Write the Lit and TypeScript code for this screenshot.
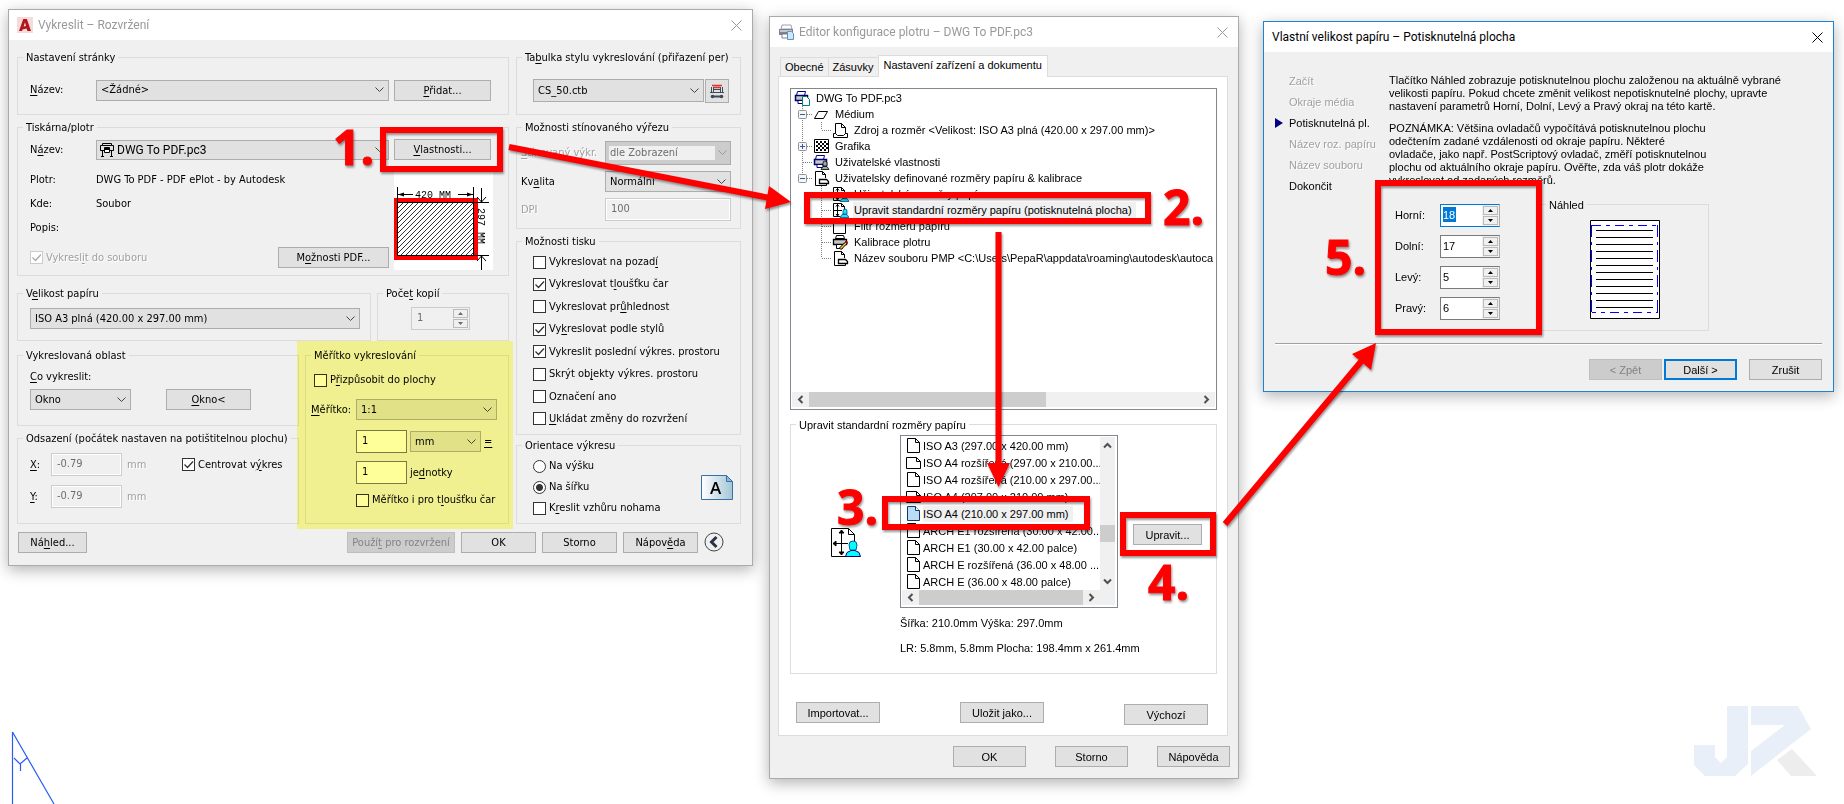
import { LitElement, html, css, svg, nothing, TemplateResult } from "lit";
import { customElement } from "lit/decorators.js";

const page = svg`<path d="M1.500 1.500h8l4 4v10h-12z" fill="#fff" stroke="#000"/><path d="M9.500 1.500v4h4" fill="none" stroke="#000"/>`;
const pageWide = svg`<path d="M.5 3.500h10l4 4v7h-14z" fill="#fff" stroke="#000"/><path d="M10.500 3.500v4h4" fill="none" stroke="#000"/>`;
const printerBlue = svg`<path d="M3.500 1.500h8l-1 4h-8z" fill="#fff" stroke="#00007b"/><path d="M1.500 5.500h12v5h-12z" fill="#c6c6c6" stroke="#00007b" stroke-width="1.500"/><path d="M4 10.500h6v3h-6z" fill="#fff" stroke="#00007b"/>`;
const person = svg`<path d="M11 9a2 2 0 0 1 4 0v3h-4z" fill="#19e3ff" stroke="#00507b" stroke-width=".8"/><path d="M8 15.500l2-3h5l2 3z" fill="#19e3ff" stroke="#00507b" stroke-width=".8"/>`;

const icons: Record<string, unknown> = {
  page,
  pageWide,
  pageBlue: svg`<path d="M1.500 1.500h8l4 4v10h-12z" fill="#bcdcf4" stroke="#123a66"/><path d="M9.500 1.500v4h4" fill="#fff" stroke="#123a66"/>`,
  printer: svg`${printerBlue}<path d="M8.500 6.500h4l3 3v6h-7z" fill="#fff" stroke="#007b7b"/>`,
  sheet: svg`<path d="M1.500 12.500l4-7h9l-4 7z" fill="#fff" stroke="#000"/>`,
  source: svg`<path d="M3.500 12V1.500h6l4 4V12" fill="#fff" stroke="#000"/><path d="M9.500 1.500v4h4" fill="none" stroke="#000"/><path d="M3.500 11.500h-2v4h14v-4h-2l-2 2h-6z" fill="#fff" stroke="#000"/>`,
  graphic: svg`<path d="M1.500 1.500h14v13h-14z" fill="#fff" stroke="#000"/><path d="M3 3h2v2H3zM7 3h2v2H7zM11 3h2v2h-2zM5 5h2v2H5zM9 5h2v2H9zM13 5h2v2h-2zM3 7h2v2H3zM7 7h2v2H7zM11 7h2v2h-2zM5 9h2v2H5zM9 9h2v2H9zM13 9h2v2h-2zM3 11h2v2H3zM7 11h2v2H7zM11 11h2v2h-2z" fill="#000"/>`,
  props: svg`${printerBlue}<path d="M10 9a2 2 0 0 1 4 0v3h-4z" fill="#9aa" stroke="#000" stroke-width=".8"/><path d="M8 15.500l2-3h4l2 3z" fill="#9aa" stroke="#000" stroke-width=".8"/>`,
  custom: svg`<path d="M2.500 1.500h7l3 3V8M2.500 1.500v14h11v-2" fill="#fff" stroke="#000"/><path d="M9.500 1.500v3h3" fill="none" stroke="#000"/><path d="M6.500 9.500h7l2 2v2h-9z" fill="#fff" stroke="#000" stroke-width="1.300"/>`,
  userSize: svg`<path d="M1.500 1.500h8l3 3v10h-11z" fill="#fff"/><path d="M1.500 1.500h8l3 3V8M1.500 1.500v13h7M9.500 1.500v3h3M5.500 2v12M2 8.500h8M4 4.500l1.500-2 1.500 2M4 12l1.500 2 1.500-2" fill="none" stroke="#000"/>${person}`,
  calib: svg`<path d="M4.500 1.500h7l1 3h-9z" fill="#fff" stroke="#000"/><path d="M1.500 5.500h13v5h-13z" fill="#c6c6c6" stroke="#000" stroke-width="1.300"/><path d="M4.500 10.500h6v4h-6z" fill="#fff" stroke="#000"/><path d="M8 15l7-7" stroke="#000" stroke-width="3"/><path d="M8.500 14.500l5.500-5.500" stroke="#ffd23c" stroke-width="1.500"/><path d="M14 9l1.500-1.500" stroke="#c00" stroke-width="2"/>`,
  plotter: svg`<path d="M3.500 1.500h9v2h2v5h-2M3.500 1.500v2h-2v5h2M3.500 3.500h9M1.500 8.500h13M3.500 8.500v6M12.500 8.500v6M2 14.500h3M11 14.500h3" fill="none" stroke="#000"/><path d="M5.500 5.500h5v5h-5z" fill="#fff" stroke="#000"/><path d="M6 6h4v2H6z"/>`,
  appA: svg`<path d="M0 0h16v16H0z" fill="#f3dcda"/><path d="M2 14L6.300 2h3.600L14 14h-3.600L9.500 11.500l-4 1L5 14z" fill="#b3141c"/><path d="M8 5.200L6.600 9.600l2.400-.6z" fill="#f3dcda"/>`,
  appPrinter: svg`<path d="M4 1h9l1 4H3z" fill="#fff" stroke="#889" stroke-width=".8"/><path d="M1 5h14v6H1z" fill="#7d848c"/><path d="M2 6h12v2H2z" fill="#c3c8cd"/><path d="M4 10h7v4H4z" fill="#fff" stroke="#667" stroke-width=".8"/><path d="M9.500 7.500h4l2 2v6h-6z" fill="#cfe6f8" stroke="#5b94c4"/>`,
};

const icon = (name: string) =>
  html`<svg class="ico" width="17" height="17" viewBox="0 0 17 17" aria-hidden="true">${icons[name]}</svg>`;

interface Node {
  level: number;
  icon: string;
  text: string;
  box?: "-" | "+";
  last?: boolean;
  main?: boolean;
  selected?: boolean;
}

const tree: Node[] = [
  { level: 0, icon: "printer", text: "DWG To PDF.pc3" },
  { level: 1, icon: "sheet", text: "Médium", box: "-" },
  { level: 2, icon: "source", text: "Zdroj a rozměr <Velikost: ISO A3 plná (420.00 x 297.00 mm)>", last: true, main: true },
  { level: 1, icon: "graphic", text: "Grafika", box: "+" },
  { level: 1, icon: "props", text: "Uživatelské vlastnosti" },
  { level: 1, icon: "custom", text: "Uživatelsky definované rozměry papíru & kalibrace", box: "-", last: true },
  { level: 2, icon: "userSize", text: "Uživatelské rozměry papíru" },
  { level: 2, icon: "userSize", text: "Upravit standardní rozměry papíru (potisknutelná plocha)", selected: true },
  { level: 2, icon: "page", text: "Filtr rozměrů papíru" },
  { level: 2, icon: "calib", text: "Kalibrace plotru" },
  { level: 2, icon: "custom", text: "Název souboru PMP <C:\\Users\\PepaR\\appdata\\roaming\\autodesk\\autoca", last: true },
];

const sizes: [string, string][] = [
  ["page", "ISO A3 (297.00 x 420.00 mm)"],
  ["pageWide", "ISO A4 rozšířená (297.00 x 210.00..."],
  ["page", "ISO A4 rozšířená (210.00 x 297.00..."],
  ["pageWide", "ISO A4 (297.00 x 210.00 mm)"],
  ["pageBlue", "ISO A4 (210.00 x 297.00 mm)"],
  ["page", "ARCH E1 rozšířená (30.00 x 42.00..."],
  ["page", "ARCH E1 (30.00 x 42.00 palce)"],
  ["page", "ARCH E rozšířená (36.00 x 48.00 ..."],
  ["page", "ARCH E (36.00 x 48.00 palce)"],
];

const plotOptions: [TemplateResult, boolean][] = [
  [html`Vykreslovat na pozad<u>í</u>`, false],
  [html`Vykreslovat t<u>l</u>oušťku čar`, true],
  [html`Vykreslovat pr<u>ů</u>hlednost`, false],
  [html`Vy<u>k</u>reslovat podle stylů`, true],
  [html`Vykreslit poslední výkres. prostoru`, true],
  [html`Skrýt ob<u>j</u>ekty výkres. prostoru`, false],
  [html`Označení ano`, false],
  [html`<u>U</u>kládat změny do rozvržení`, false],
];

const check = (label: unknown, checked = false, disabled = false) => html`
  <label class="check ${disabled ? "off" : ""}">
    <input type="checkbox" .checked=${checked} ?disabled=${disabled} /><span>${label}</span>
  </label>`;

const drop = (id: string, value: string, label?: string, disabled = false) => html`
  <select id=${id} aria-label=${label ?? nothing} ?disabled=${disabled}><option>${value}</option></select>`;

const spin = (id: string, value: string, disabled = false, active = false, label?: string) => html`
  <span class="spin ${active ? "active" : ""} ${disabled ? "off" : ""}">
    <span class="entry"><input id=${id} class=${active ? "hot" : ""} aria-label=${label ?? nothing} .value=${value} ?disabled=${disabled} /></span>
    <span class="steps">
      <button aria-label="Zvýšit" ?disabled=${disabled}><svg width="5" height="3"><path d="M0 3L2.500 0 5 3z" fill="currentColor"/></svg></button>
      <button aria-label="Snížit" ?disabled=${disabled}><svg width="5" height="3"><path d="M0 0h5L2.500 3z" fill="currentColor"/></svg></button>
    </span>
  </span>`;

const closeX = html`<button class="close" aria-label="Zavřít"><svg width="11" height="11"><path d="M.5.5l10 10M10.500.5l-10 10" stroke="currentColor" fill="none"/></svg></button>`;

const chev = (d: string) => html`<svg width="9" height="9"><path d=${d} stroke="#505050" stroke-width="2" fill="none"/></svg>`;
const hbar = (cls: string) => html`
  <div class="hbar ${cls}">
    <button aria-label="Vlevo">${chev("M6.500 1L3 4.500 6.500 8")}</button>
    <div class="track"><div class="thumb"></div></div>
    <button aria-label="Vpravo">${chev("M2.500 1L6 4.500 2.500 8")}</button>
  </div>`;

@customElement("app-root")
export class AppRoot extends LitElement {
  static styles = css`
    :host { display: block; }
    * { box-sizing: border-box; }
    .desk { position: relative; min-height: 100vh; overflow: hidden; background: #fff; color: #000; }
    .window { position: absolute; background: #f0f0f0; border: 1px solid #aaa; box-shadow: 0 4px 14px rgba(0, 0, 0, 0.3); }
    .plot { left: 8px; top: 9px; width: 745px; font: 11px/16px "DejaVu Sans Condensed", "Noto Sans", sans-serif; }
    .editor { left: 769px; top: 16px; width: 470px; font: 11px/16px "Liberation Sans", Arial, sans-serif; }
    .wizard { left: 1263px; top: 21px; width: 571px; border-color: #1883d7; font: 11px/13px "Liberation Sans", Arial, sans-serif; }
    .title { display: flex; align-items: center; gap: 4px; height: 30px; padding: 0 10px 0 8px; background: #fff; color: #999; font: 12px/16px Roboto, "Open Sans", sans-serif; }
    .title h1 { flex: 1; margin: 0; font: inherit; }
    .wizard .title { color: #000; }
    .close { display: flex; width: 11px; height: 11px; padding: 0; border: 0; background: none; color: inherit; }
    .ico { display: block; flex: none; }

    button, select, input { font: inherit; color: inherit; margin: 0; border-radius: 0; outline: none; }
    .btn { height: 21px; padding: 0; border: 1px solid #adadad; background: #e1e1e1; line-height: 18px; white-space: nowrap; text-align: center; }
    .btn:disabled { background: #ccc; border-color: #bfbfbf; color: #838383; }
    .btn.main { border: 2px solid #0078d7; line-height: 16px; }
    u { text-decoration: underline; text-underline-offset: 2px; }
    select { appearance: none; width: 100%; height: 21px; padding: 0 20px 0 4px; border: 1px solid #adadad; background: #e1e1e1 url('data:image/svg+xml,<svg xmlns="http://www.w3.org/2000/svg" width="9" height="6"><path d="M.5.5l4 4 4-4" fill="none" stroke="%23444"/></svg>') no-repeat right 4px center; }
    select:disabled { opacity: 1; color: #6d6d6d; background: #ccc url('data:image/svg+xml,<svg xmlns="http://www.w3.org/2000/svg" width="9" height="6"><path d="M.5.5l4 4 4-4" fill="none" stroke="%23999"/></svg>') no-repeat right 3px center; background-image: url('data:image/svg+xml,<svg xmlns="http://www.w3.org/2000/svg" width="9" height="6"><path d="M.5.5l4 4 4-4" fill="none" stroke="%23999"/></svg>'), linear-gradient(#f0f0f0, #f0f0f0); background-position: right 3px center, 3px 4px; background-size: 9px 6px, calc(100% - 18px) calc(100% - 8px); }
    input { border: 1px solid #7a7a7a; background: #fff; height: 23px; width: 100%; padding: 0 5px 3px; }
    input:disabled { border-color: #ccc; background: #f0f0f0; color: #6d6d6d; box-shadow: inset 0 0 0 1px #fff; }
    fieldset { min-width: 0; margin: 0; padding: 0; border: 1px solid #dcdcdc; display: flex; flex-direction: column; }
    legend { margin-left: 5px; padding: 0 3px; height: 16px; line-height: 18px; white-space: nowrap; }
    label { white-space: nowrap; }
    .off { color: #a0a0a0; text-shadow: 1px 1px #fff; }
    .check { display: flex; align-items: center; gap: 3px; height: 16px; }
    input[type="checkbox"], input[type="radio"] { appearance: none; flex: none; width: 13px; height: 13px; padding: 0; border: 1px solid #333; background: #fff center / 11px 11px no-repeat; }
    input[type="radio"] { border-radius: 50%; }
    input[type="checkbox"]:checked { background-image: url('data:image/svg+xml,<svg xmlns="http://www.w3.org/2000/svg" width="11" height="11"><path d="M1.500 5.500l3 3L10 2.500" fill="none" stroke="%23333" stroke-width="1.300"/></svg>'); }
    input[type="checkbox"]:disabled { border-color: #ccc; }
    input[type="checkbox"]:disabled:checked { background-image: url('data:image/svg+xml,<svg xmlns="http://www.w3.org/2000/svg" width="11" height="11"><path d="M1.500 5.500l3 3L10 2.500" fill="none" stroke="%23aaa" stroke-width="1.300"/></svg>'); }
    input[type="radio"]:checked { background-image: radial-gradient(circle, #333 3px, transparent 4px); }

    .cols { display: grid; grid-template-columns: 1fr 225px; gap: 7px; padding: 9px 11px 0 8px; }
    .stack { display: flex; flex-direction: column; }
    .setup { display: grid; grid-template-columns: 61px 1fr 97px; column-gap: 5px; align-items: center; padding: 14px 17px 13px 12px; }
    .setup .btn { margin-top: 1px; }
    .printer { margin-top: 4px; }
    .device { display: grid; grid-template-columns: 61px 1fr 97px; column-gap: 5px; align-items: center; padding: 4px 17px 7px 12px; grid-template-rows: 21px 8px 24px 24px 24px 7px 21px; }
    .device .wide { grid-column: 2; }
    .device .first { grid-column: 1; }
    .device .foot { grid-column: 1 / 3; grid-row: 7; display: flex; justify-content: space-between; align-items: center; }
    .device .foot .btn { width: 111px; }
    .preview { grid-column: 3; grid-row: 2 / 8; align-self: end; display: block; margin-bottom: -2px; }
    .r3 { grid-row: 3; } .r4 { grid-row: 4; } .r5 { grid-row: 5; }
    .picked { position: relative; }
    .picked .ico { position: absolute; left: 3px; top: 2px; }
    .picked select { padding-left: 20px; height: 20px; display: block; font: 12px Roboto, "Liberation Sans", sans-serif; }
    .two { display: grid; grid-template-columns: 354px 1fr; gap: 6px; margin-top: 9px; }
    .paper { padding: 7px 10px 11px 12px; }
    .paper select { display: block; }
    .copies { padding: 6px 38px 10px 33px; }
    .two.scale { grid-template-columns: 282px 1fr; margin-top: 6px; }
    .area { display: grid; grid-template-columns: 101px 85px; column-gap: 35px; row-gap: 4px; padding: 6px 0 15px 12px; }
    .area label { grid-column: 1 / 3; }
    .offset { display: grid; grid-template-columns: 16px 71px 50px auto; column-gap: 5px; row-gap: 9px; align-items: center; padding: 7px 0 15px 12px; }
    .gapTop { margin-top: 4px; }
    .ratio { display: grid; grid-template-columns: 42px 51px 71px 1fr; column-gap: 3px; align-items: center; padding: 9px 11px 15px 5px; grid-template-rows: 16px 11px 21px 10px 23px 8px 23px 8px 16px; }
    .ratio > :nth-child(1) { grid-area: 1 / 1 / 2 / 5; padding-left: 3px; }
    .ratio .a { grid-area: 3 / 1; }
    .ratio .b { grid-area: 3 / 2 / 4 / 5; }
    .ratio .c { grid-area: 5 / 2; }
    .ratio .d { grid-area: 5 / 3; }
    .ratio .e { grid-area: 5 / 4; }
    .ratio .f { grid-area: 7 / 2; }
    .ratio .g { grid-area: 7 / 3; }
    .ratio .h { grid-area: 9 / 2; }
    .bottom { display: flex; gap: 6px; padding: 8px 28px 12px 9px; }
    .bottom .btn { width: 75px; }
    .bottom .btn.look { width: 69px; margin-right: auto; }
    .bottom .btn.apply { width: 108px; }
    .round { width: 20px; height: 20px; padding: 0; border: 0; background: none; display: block; }
    .styleTable { display: grid; grid-template-columns: 1fr 24px; gap: 1px; padding: 14px 11px 11px 16px; }
    .styleTable select { height: 23px; }
    .styleTable button { height: 24px; padding: 0; border: 1px solid #adadad; background: #e1e1e1; display: grid; place-items: center; }
    .shade { display: grid; grid-template-columns: 84px 1fr; align-items: center; grid-template-rows: 24px 21px 23px; row-gap: 6px; padding: 6px 9px 7px 4px; }
    .shade select:disabled { height: 24px; }
    .grow { flex: 1; }
    .options { flex: 1; display: flex; flex-direction: column; justify-content: space-between; padding: 5px 0 7px 16px; }
    .orient { display: grid; grid-template-columns: 1fr auto; row-gap: 5px; padding: 5px 7px 7px 16px; align-items: center; }
    .orient svg { grid-area: 1 / 2 / 4 / 3; }
    .orientBox { margin-top: 2px; }
    .marker { position: absolute; left: 288px; top: 331px; width: 216px; height: 188px; background: #ff9; mix-blend-mode: multiply; pointer-events: none; }

    .spin { display: flex; height: 23px; border: 1px solid #7a7a7a; border-right-color: #adadad; background: #fff; text-shadow: none; }
    .spin .entry { flex: 1; min-width: 0; padding: 2px; }
    .spin input { display: block; width: 100%; height: 15px; padding: 0; border: 0; background: none; box-shadow: none; }
    .spin .steps { display: grid; gap: 1px; width: 17px; padding: 1px; background: #f0f0f0; }
    .spin .steps button { display: grid; place-items: center; padding: 0; border: 1px solid #bbb; background: #f0f0f0; }
    .spin.off { border-color: #ccc; background: #f0f0f0; color: #6d6d6d; }
    .spin.off .entry { padding-left: 5px; }
    .spin.active { border-color: #0078d7 #adadad #0078d7 #0078d7; }
    .spin .hot { width: 13px; background: #0078d7; color: #fff; }

    .body { padding: 8px 10px 11px 8px; }
    .tabs { display: flex; align-items: flex-end; height: 21px; padding-left: 2px; position: relative; }
    .tabs button { height: 19px; padding: 0 4px; border: 1px solid #dcdcdc; border-width: 1px 0 0 1px; background: #f0f0f0; white-space: nowrap; line-height: 16px; }
    .tabs button.on { height: 22px; margin-bottom: -1px; padding: 0 5px 3px; border-right-width: 1px; background: #fff; }
    .panel { border: 1px solid #dcdcdc; background: #fff; padding: 11px 10px 10px 11px; }
    .tree { border: 1px solid #828790; padding: 1px 0 2px; display: flex; flex-direction: column; overflow: hidden; }
    .tree ul { min-height: 302px; }
    ul, ol { list-style: none; margin: 0; padding: 0; min-width: 0; }
    .tree li { display: flex; height: 16px; align-items: center; white-space: nowrap; gap: 4px; }
    .tree li .joint { flex: none; display: block; margin-right: -4px; }
    .tree li span { padding: 0 4px 0 1px; }
    .tree li.sel span { background: #f0f0f0; }
    .hbar { display: grid; grid-template-columns: 17px 1fr 17px; height: 15px; background: #f0f0f0; }
    .hbar button, .vbar button { display: grid; place-items: center; padding: 0; border: 0; background: none; }
    .thumb { background: #cdcdcd; height: 100%; }
    .hbar.long .thumb { width: 61%; }
    .tree .hbar { margin: 0 1px; }
    .std { margin-top: 6px; }
    .stdBody { display: grid; grid-template-columns: 109px 218px 1fr; padding: 3px 14px 15px 0; }
    .pick { align-self: center; justify-self: center; margin-top: 42px; }
    .list { border: 1px solid #828790; padding: 1px 2px 2px 1px; display: grid; grid-template-columns: minmax(0, 1fr) 15px; }
    .list li { display: flex; align-items: center; height: 17px; padding-left: 4px; white-space: nowrap; }
    .list li span { padding-right: 4px; }
    .list li.sel span { background: #f0f0f0; }
    .vbar { display: grid; grid-template-rows: 17px 1fr 17px; background: #f0f0f0; }
    .vbar .track { display: flex; flex-direction: column; justify-content: flex-end; padding-bottom: 31px; }
    .vbar .thumb { height: 17px; }
    .edit { width: 69px; align-self: center; justify-self: end; margin-top: 26px; }
    .info { grid-column: 2 / 4; margin: 7px 0 2px; }
    .actions { display: flex; justify-content: space-between; align-items: flex-start; padding: 28px 9px 0 6px; }
    .actions .btn { width: 84px; }
    .actions .btn:last-child { margin-top: 2px; }
    .close-row { display: grid; grid-template-columns: 73px 73px 73px; justify-content: end; padding: 10px 0 0; margin-right: -2px; column-gap: 29px; }

    .guide { display: grid; grid-template-columns: 114px 1fr; padding: 21px 11px 0; }
    .guide ol { display: grid; grid-auto-rows: 21px; align-content: start; }
    .guide li { display: flex; align-items: center; gap: 6px; height: 16px; }
    .guide li svg { display: block; width: 8px; height: 10px; }
    .lead { padding-top: 1px; }
    .guide p { margin: 0 0 9px; white-space: nowrap; }
    .values { display: grid; grid-template-columns: 151px 169px; height: 147px; margin-top: 4px; }
    .nums { display: grid; grid-template-columns: 45px 60px; grid-auto-rows: 23px; row-gap: 8px; align-items: center; padding: 8px 0 0 6px; align-content: start; }
    .sample { display: flex; justify-content: center; padding: 8px 0 11px; }
    .rule { height: 2px; margin: 0 11px; border-top: 1px solid #a0a0a0; background: #fff; }
    .nav { display: flex; justify-content: flex-end; padding: 14px 11px 11px; gap: 2px; }
    .nav .btn { width: 73px; }
    .nav .btn:last-child { margin-left: 10px; }

    .marks { position: absolute; left: 0; top: 0; width: 100%; height: 100%; pointer-events: none; }
    .marks text { font: 700 48px "Open Sans", "Noto Sans", sans-serif; fill: #f00; stroke: #f00; stroke-width: 1px; }
    .red { filter: drop-shadow(1px 2px 1px rgba(0, 0, 0, 0.4)); }
  `;

  private joint(n: Node) {
    const dots = (d: string) => svg`<path d=${d} stroke="#808080" stroke-dasharray="1 1" fill="none"/>`;
    if (n.level === 0) return html`<svg class="joint" width="3" height="16"></svg>`;
    if (n.level === 1)
      return html`<svg class="joint" width="22" height="16">
        ${dots(n.last ? "M11.500 0V8" : "M11.500 0V16")}${dots("M12 8.500H22")}
        ${n.box
          ? svg`<rect x="7.500" y="4.500" width="8" height="8" rx="1" fill="#f6f6f6" stroke="#919191"/><path d=${n.box === "+" ? "M9 8.500h5M11.500 6v5" : "M9 8.500h5"} stroke="#3a55a5"/>`
          : nothing}
      </svg>`;
    return html`<svg class="joint" width="41" height="16">
      ${n.main ? dots("M11.500 0V16") : nothing}${dots(n.last ? "M30.500 0V8" : "M30.500 0V16")}${dots("M31 8.500H41")}
    </svg>`;
  }

  private plotWindow() {
    return html`<section class="window plot">
      <header class="title">${icon("appA")}<h1>Vykreslit – Rozvržení</h1>${closeX}</header>
      <div class="cols">
        <div class="stack">
          <fieldset>
            <legend>Nastavení stránky</legend>
            <div class="setup">
              <label for="setup"><u>N</u>ázev:</label>${drop("setup", "<Žádné>")}
              <button class="btn"><u>P</u>řidat...</button>
            </div>
          </fieldset>
          <fieldset class="printer">
            <legend>Tiskárna/plotr</legend>
            <div class="device">
              <label for="dev">N<u>á</u>zev:</label>
              <span class="picked">${drop("dev", "DWG To PDF.pc3")}${icon("plotter")}</span>
              <button class="btn"><u>V</u>lastnosti...</button>
              <span class="first r3">Plotr:</span><span class="wide r3">DWG To PDF - PDF ePlot - by Autodesk</span>
              <span class="first r4">Kde:</span><span class="wide r4">Soubor</span>
              <span class="first r5">Popis:</span>
              <div class="foot">${check(html`Vykresl<u>i</u>t do souboru`, true, true)}<button class="btn">M<u>o</u>žnosti PDF...</button></div>
              <svg class="preview" width="99" height="98" viewBox="0 0 99 98" role="img" aria-label="Náhled papíru">
                <defs><pattern id="hatch" width="5" height="5" patternUnits="userSpaceOnUse"><path d="M-1 6L6-1M-1 1L1-1M4 6l2-2" stroke="#000" stroke-width=".8"/></pattern></defs>
                <path d="M0 0h99v98H0z" fill="#fff"/>
                <path d="M0 26h84v62H0z" fill="#f00"/>
                <path d="M3.500 30.500h76v53h-76z" fill="#fff"/>
                <path d="M3.500 30.500h76v53h-76z" fill="url(#hatch)" stroke="#000"/>
                <path d="M3.500 15v15M79.500 15v15M4 22.500h15M64 22.500h15M87.500 16v14M80 30.500h15M80 83.500h15M87.500 83v15M83 25l4.500 5 4.500-5M83 89l4.500-5 4.500 5" fill="none" stroke="#000"/>
                <path d="M4 22.500l6-2v4zM79 22.500l-6-2v4z"/>
                <text x="21" y="26" font-family="Liberation Mono" font-size="10">420 MM</text>
                <text x="36" y="-84" transform="rotate(90)" font-family="Liberation Mono" font-size="10">297 MM</text>
              </svg>
            </div>
          </fieldset>
          <div class="two">
            <fieldset><legend>V<u>e</u>likost papíru</legend><div class="paper">${drop("paper", "ISO A3 plná (420.00 x 297.00 mm)", "Velikost papíru")}</div></fieldset>
            <fieldset><legend>Poče<u>t</u> kopií</legend><div class="copies">${spin("copies", "1", true, false, "Počet kopií")}</div></fieldset>
          </div>
          <div class="two scale">
            <div class="stack">
              <fieldset>
                <legend>Vykreslovaná oblast</legend>
                <div class="area"><label for="what"><u>C</u>o vykreslit:</label>${drop("what", "Okno")}<button class="btn"><u>O</u>kno&lt;</button></div>
              </fieldset>
              <fieldset class="gapTop">
                <legend>Odsazení (počátek nastaven na potištitelnou plochu)</legend>
                <div class="offset">
                  <label for="ox"><u>X</u>:</label><input id="ox" value="-0.79" disabled /><span class="off">mm</span>${check(html`Centrovat v<u>ý</u>kres`, true)}
                  <label for="oy"><u>Y</u>:</label><input id="oy" value="-0.79" disabled /><span class="off">mm</span>
                </div>
              </fieldset>
            </div>
            <fieldset>
              <legend>Měřítko vykreslování</legend>
              <div class="ratio">
                ${check(html`P<u>ř</u>izpůsobit do plochy`)}
                <label class="a" for="ratio"><u>M</u>ěřítko:</label><span class="b">${drop("ratio", "1:1")}</span>
                <input class="c" value="1" aria-label="Jednotky papíru" /><span class="d">${drop("unit", "mm", "Jednotka")}</span><span class="e"><u>=</u></span>
                <input id="units" class="f" value="1" /><label class="g" for="units">je<u>d</u>notky</label>
                <span class="h">${check(html`Měřítko i pro t<u>l</u>oušťku čar`)}</span>
              </div>
            </fieldset>
          </div>
        </div>
        <div class="stack">
          <fieldset>
            <legend>Ta<u>b</u>ulka stylu vykreslování (přiřazení per)</legend>
            <div class="styleTable">${drop("ctb", "CS_50.ctb", "Tabulka stylu vykreslování")}
              <button aria-label="Upravit tabulku"><svg width="14" height="15"><path d="M1.500 3v5M12.500 3v5M3.500 3v5M10.500 3v5M0 8.500h14M4 5.500h6" fill="none" stroke="#3d4a58"/><path d="M2 1.500h10M4 3.500h6" stroke="#d33" stroke-width="1.500"/><path d="M2 12.500h10" stroke="#3d4a58" stroke-width="2"/><circle cx="11.500" cy="12.500" r="1.800" fill="#3d4a58"/><circle cx="2.500" cy="12.500" r="1.800" fill="#3d4a58"/></svg></button>
            </div>
          </fieldset>
          <fieldset class="printer">
            <legend>Možnosti stínovaného výřezu</legend>
            <div class="shade">
              <label class="off" for="sv"><u>S</u>tínovaný výkr.</label>${drop("sv", "dle Zobrazení", undefined, true)}
              <label for="q">Kv<u>a</u>lita</label>${drop("q", "Normální")}
              <label class="off" for="dpi">DPI</label><input id="dpi" value="100" disabled />
            </div>
          </fieldset>
          <fieldset class="gapTop grow">
            <legend>Možnosti tisku</legend>
            <div class="options">${plotOptions.map(([t, c]) => check(t, c))}</div>
          </fieldset>
          <fieldset class="orientBox">
            <legend>Orientace výkresu</legend>
            <div class="orient">
              <label class="check"><input type="radio" name="o" /><span>Na výšku</span></label>
              <label class="check"><input type="radio" name="o" checked /><span>Na šířku</span></label>
              ${check(html`K<u>r</u>eslit vzhůru nohama`)}
              <svg width="32" height="25">
                <defs><linearGradient id="sheetFill"><stop offset="0" stop-color="#fff"/><stop offset="1" stop-color="#a3c6d6"/></linearGradient></defs>
                <path d="M.5.500h25l6 6v18H.5z" fill="url(#sheetFill)" stroke="#3a6ea5"/><path d="M25.500.500v6h6z" fill="#8db9dc" stroke="#3a6ea5"/>
                <text x="9" y="19" font-family="Open Sans" font-weight="600" font-size="17">A</text>
              </svg>
            </div>
          </fieldset>
        </div>
      </div>
      <div class="bottom">
        <button class="btn look">Ná<u>h</u>led...</button>
        <button class="btn apply" disabled>Použí<u>t</u> pro rozvržení</button>
        <button class="btn">OK</button><button class="btn">Storno</button><button class="btn">Nápov<u>ě</u>da</button>
        <button class="round" aria-label="Méně voleb"><svg width="20" height="20"><circle cx="10" cy="10" r="9" fill="#eef0f3" stroke="#444"/><path d="M12.500 5l-5 5 5 5" fill="none" stroke="#2c3440" stroke-width="3"/></svg></button>
      </div>
      <div class="marker"></div>
    </section>`;
  }

  private editorWindow() {
    return html`<section class="window editor">
      <header class="title">${icon("appPrinter")}<h1>Editor konfigurace plotru – DWG To PDF.pc3</h1>${closeX}</header>
      <div class="body">
        <div class="tabs"><button>Obecné</button><button>Zásuvky</button><button class="on">Nastavení zařízení a dokumentu</button></div>
        <div class="panel">
          <div class="tree">
            <ul>${tree.map((n) => html`<li class=${n.selected ? "sel" : ""}>${this.joint(n)}${icon(n.icon)}<span>${n.text}</span></li>`)}</ul>
            ${hbar("long")}
          </div>
          <fieldset class="std">
            <legend>Upravit standardní rozměry papíru</legend>
            <div class="stdBody">
              <svg class="pick" width="30" height="30" viewBox="0 0 30 30"><path d="M.5.500h17l6 6v8M.5.500v28h17M17.500.500v6h6" fill="none" stroke="#000"/><path d="M10.500 2v25M2 15.500h15M8 5l2.500-3L13 5zM8 24l2.500 3 2.500-3zM5 13l-3 2.500L5 18z" stroke="#000"/><path d="M18 17a4 4 0 0 1 8 0l-1 5h-6z" fill="#0ff" stroke="#005a9c"/><path d="M14.500 28.500l1.500-4 4-2h4l4 2 1.500 4z" fill="#0ff" stroke="#00007b"/></svg>
              <div class="list">
                <ul>${sizes.map(([i, t]) => html`<li class=${i === "pageBlue" ? "sel" : ""}>${icon(i)}<span>${t}</span></li>`)}</ul>
                <div class="vbar"><button aria-label="Nahoru">${chev("M1 6.500L4.500 3 8 6.500")}</button><div class="track"><div class="thumb"></div></div><button aria-label="Dolů">${chev("M1 2.500L4.500 6 8 2.500")}</button></div>
                ${hbar("short")}<div class="hbar"></div>
              </div>
              <button class="btn edit">Upravit...</button>
              <span class="info">Šířka: 210.0mm Výška: 297.0mm</span>
              <span class="info">LR: 5.8mm, 5.8mm Plocha: 198.4mm x 261.4mm</span>
            </div>
          </fieldset>
          <div class="actions"><button class="btn">Importovat...</button><button class="btn">Uložit jako...</button><button class="btn">Výchozí</button></div>
        </div>
        <div class="close-row"><button class="btn">OK</button><button class="btn">Storno</button><button class="btn">Nápověda</button></div>
      </div>
    </section>`;
  }

  private wizardWindow() {
    const steps: [string, number][] = [["Začít", 0], ["Okraje média", 0], ["Potisknutelná pl.", 2], ["Název roz. papíru", 0], ["Název souboru", 0], ["Dokončit", 1]];
    const fields: [string, string, string][] = [["top", "Horní:", "18"], ["bottom", "Dolní:", "17"], ["left", "Levý:", "5"], ["right", "Pravý:", "6"]];
    return html`<section class="window wizard">
      <header class="title"><h1>Vlastní velikost papíru – Potisknutelná plocha</h1>${closeX}</header>
      <div class="guide">
        <ol>${steps.map(([t, s]) => html`<li class=${s ? "" : "off"}><svg>${s === 2 ? svg`<path d="M0 0l8 5-8 5z" fill="#000080"/>` : nothing}</svg>${t}</li>`)}</ol>
        <div class="lead">
          <p>Tlačítko Náhled zobrazuje potisknutelnou plochu založenou na aktuálně vybrané<br />velikosti papíru. Pokud chcete změnit velikost nepotisknutelné plochy, upravte<br />nastavení parametrů Horní, Dolní, Levý a Pravý okraj na této kartě.</p>
          <p>POZNÁMKA: Většina ovladačů vypočítává potisknutelnou plochu<br />odečtením zadané vzdálenosti od okraje papíru. Některé<br />ovladače, jako např. PostScriptový ovladač, změří potisknutelnou<br />plochu od aktuálního okraje papíru. Ověřte, zda váš plotr dokáže<br />vykreslovat od zadaných rozměrů.</p>
          <div class="values">
            <div class="nums">${fields.map(([id, l, v]) => html`<label for=${id}>${l}</label>${spin(id, v, false, id === "top")}`)}</div>
            <div><fieldset>
              <legend>Náhled</legend>
              <div class="sample"><svg width="70" height="99">
                <path d="M.5.500h69v98H.5z" fill="#fff" stroke="#000"/>
                <path d="M2 5.500H68" stroke="#00f" stroke-dasharray="9 5 4 5" fill="none"/><path d="M2 92.500H68" stroke="#00f" stroke-dasharray="9 5 4 5" stroke-dashoffset="5" fill="none"/>
                <path d="M1.500 5V93M67.500 5V93" stroke="#00f" stroke-dasharray="12 5 3 5" fill="none"/>
                <path d="M6 10.500h57M6 17.500h57M6 24.500h57M6 31.500h57M6 38.500h57M6 45.500h57M6 52.500h57M6 59.500h57M6 66.500h57M6 73.500h57M6 80.500h57M6 87.500h57" stroke="#000"/>
              </svg></div>
            </fieldset></div>
          </div>
        </div>
      </div>
      <div class="rule"></div>
      <div class="nav"><button class="btn" disabled>&lt; Zpět</button><button class="btn main">Další &gt;</button><button class="btn">Zrušit</button></div>
    </section>`;
  }

  render() {
    return html`<main class="desk">
      <svg class="marks" aria-hidden="true">
        <path d="M12.500 732V804M12.500 732L54 804M14 758l6 6 7-6M20.500 764v7" fill="none" stroke="#2a5cf5" stroke-width="1.200"/>
        <path d="M1727 706h21v58l-13 12h-30l-11-11v-20h21v12l6 6 6-6zM1751 706h47l13 23-60 47v-25l34-26h-34z" fill="#e8eff8"/>
        <path d="M1792 749l25 27h-26l-14-16z" fill="#ededed"/>
      </svg>
      ${this.plotWindow()}${this.editorWindow()}${this.wizardWindow()}
      <svg class="marks">
        <g class="red">
          <g fill="none" stroke="#f00" stroke-width="6">
            <rect x="383" y="130" width="117" height="39"/><rect x="807" y="195" width="341" height="26"/><rect x="885" y="499" width="202" height="28"/><rect x="1123" y="515" width="90" height="38"/><rect x="1378" y="183" width="161" height="149"/>
            <path d="M509 147L770 198M998.500 232V466M1225 524L1364 358"/>
          </g>
          <path d="M791 202L765 209L769 186zM998.500 487L987 463h23zM1376 343L1371 370L1352 354z" fill="#f00"/>
          <text x="333" y="165">1.</text><text x="1163" y="225">2.</text><text x="837" y="525">3.</text><text x="1148" y="600">4.</text><text x="1325" y="275">5.</text>
        </g>
      </svg>
    </main>`;
  }
}
